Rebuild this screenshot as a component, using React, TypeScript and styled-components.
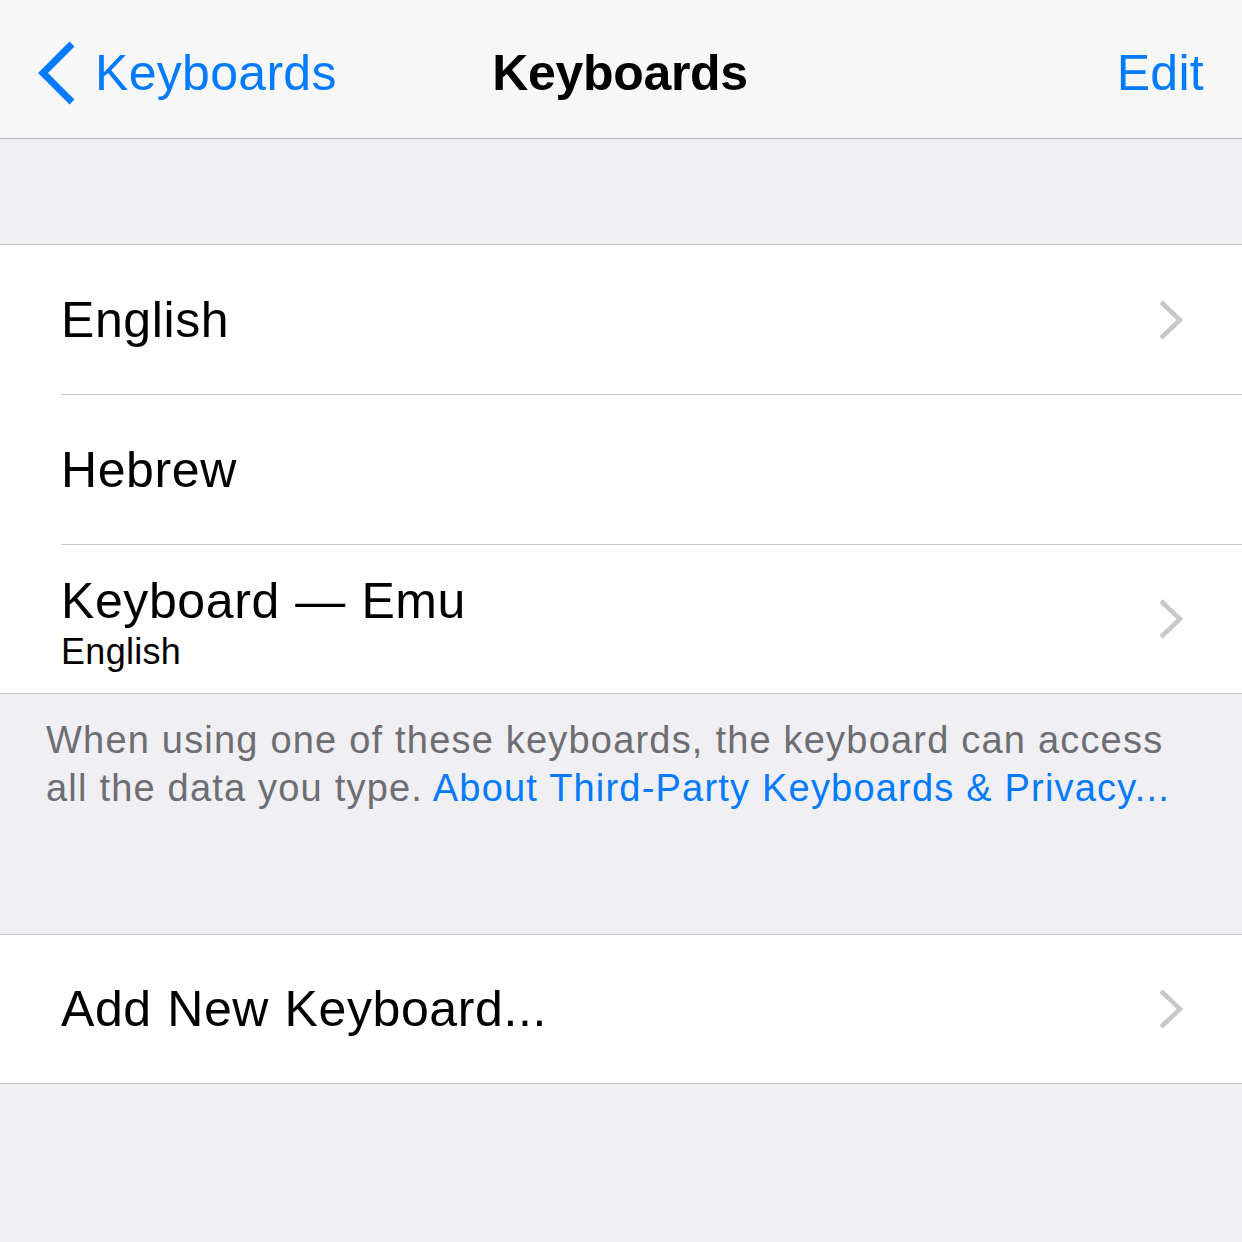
import React, { FC } from "react";
import styled, { createGlobalStyle } from "styled-components";

const GlobalStyle = createGlobalStyle`
  html, body {
    margin: 0;
    padding: 0;
    background: #efeff4;
    font-family: "Liberation Sans", Arial, sans-serif;
    -webkit-font-smoothing: antialiased;
  }
`;

const Screen = styled.div`
  width: 1242px;
  height: 1242px;
  background: #efeff4;
  overflow: hidden;
`;

const NavBar = styled.div`
  height: 130px;
  padding: 8px 38px 0 36px;
  background: #f7f7f7;
  border-bottom: 1px solid #b2b2b2;
  display: grid;
  grid-template-columns: 1fr auto 1fr;
  align-items: center;
`;

const BackButton = styled.div`
  display: flex;
  align-items: center;
  gap: 19px;
  color: #007aff;
  font-size: 50px;
  letter-spacing: 0.3px;
`;

const Title = styled.div`
  font-size: 50px;
  font-weight: 700;
  color: #000;
  letter-spacing: -0.3px;
`;

const EditButton = styled.div`
  justify-self: end;
  color: #007aff;
  font-size: 50px;
  letter-spacing: 0.3px;
`;

const Spacer = styled.div<{ $h: number }>`
  height: ${(p) => p.$h}px;
`;

const Group = styled.div`
  background: #fff;
  border-top: 1px solid #c8c7cc;
  border-bottom: 1px solid #c8c7cc;
`;

const Row = styled.div<{ $last?: boolean }>`
  height: ${(p) => (p.$last ? 148 : 149)}px;
  margin-left: 61px;
  padding-right: 58px;
  display: flex;
  align-items: center;
  justify-content: space-between;
  border-bottom: ${(p) => (p.$last ? "none" : "1px solid #c8c7cc")};
`;

const Labels = styled.div`
  display: flex;
  flex-direction: column;
  padding-top: 8px;
`;

const Label = styled.div`
  font-size: 50px;
  color: #000;
  line-height: 56px;
  letter-spacing: 0.6px;
  word-spacing: 1px;
`;

const SubLabel = styled.div`
  font-size: 36px;
  color: #000;
  line-height: 42px;
  letter-spacing: 0.3px;
  margin-top: 2px;
`;

const Footer = styled.div`
  padding: 22px 50px 0 46px;
  height: 218px;
  font-size: 38px;
  line-height: 48px;
  letter-spacing: 1.2px;
  color: #6d6d72;
`;

const Link = styled.span`
  color: #007aff;
`;

const Chevron: FC = () => (
  <svg width="26" height="42" viewBox="0 0 26 42">
    <path d="M3 3 L22 21 L3 39" fill="none" stroke="#c7c7cc" strokeWidth="4.5" />
  </svg>
);

const BackChevron: FC = () => (
  <svg width="40" height="64" viewBox="0 0 40 64">
    <path d="M36 3 L7 32 L36 61" fill="none" stroke="#007aff" strokeWidth="7" />
  </svg>
);

const App: FC = () => {
  return (
    <Screen>
      <GlobalStyle />
      <NavBar>
        <BackButton>
          <BackChevron />
          Keyboards
        </BackButton>
        <Title>Keyboards</Title>
        <EditButton>Edit</EditButton>
      </NavBar>
      <Spacer $h={105} />
      <Group>
        <Row>
          <Label>English</Label>
          <Chevron />
        </Row>
        <Row>
          <Label>Hebrew</Label>
        </Row>
        <Row $last>
          <Labels>
            <Label>Keyboard — Emu</Label>
            <SubLabel>English</SubLabel>
          </Labels>
          <Chevron />
        </Row>
      </Group>
      <Footer>
        When using one of these keyboards, the keyboard can access all the data
        you type. <Link>About Third-Party Keyboards &amp; Privacy...</Link>
      </Footer>
      <Group>
        <Row $last>
          <Label>Add New Keyboard...</Label>
          <Chevron />
        </Row>
      </Group>
    </Screen>
  );
};

export default App;
